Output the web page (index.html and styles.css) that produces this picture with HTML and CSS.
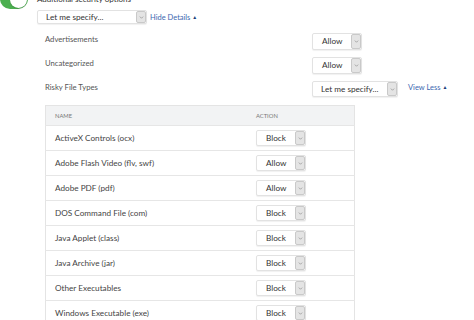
FILE: index.html
```html
<!DOCTYPE html>
<html>
<head>
<meta charset="utf-8">
<link rel="stylesheet" href="styles.css">
</head>
<body>
<div class="section">
  <div class="head">
    <div class="toggle"><span class="knob"></span></div>
    <span class="title">Additional security options</span>
  </div>
  <div class="body">
    <div class="main-row">
      <div class="select sel-main"><span class="val">Let me specify...</span><span class="arr"><svg viewBox="0 0 6 4" width="5" height="3"><path d="M0.8 0.8 L3 3 L5.2 0.8" fill="none" stroke="#8a8a8a" stroke-width="0.9"/></svg></span></div>
      <a class="link">Hide Details <span class="caret">&#9650;</span></a>
    </div>
    <div class="settings">
      <div class="set-row">
        <span class="label">Advertisements</span>
        <div class="select sel-allow"><span class="val">Allow</span><span class="arr"><svg viewBox="0 0 6 4" width="5" height="3"><path d="M0.8 0.8 L3 3 L5.2 0.8" fill="none" stroke="#8a8a8a" stroke-width="0.9"/></svg></span></div>
      </div>
      <div class="set-row">
        <span class="label">Uncategorized</span>
        <div class="select sel-allow"><span class="val">Allow</span><span class="arr"><svg viewBox="0 0 6 4" width="5" height="3"><path d="M0.8 0.8 L3 3 L5.2 0.8" fill="none" stroke="#8a8a8a" stroke-width="0.9"/></svg></span></div>
      </div>
      <div class="set-row">
        <span class="label">Risky File Types</span>
        <div class="select sel-spec"><span class="val">Let me specify...</span><span class="arr"><svg viewBox="0 0 6 4" width="5" height="3"><path d="M0.8 0.8 L3 3 L5.2 0.8" fill="none" stroke="#8a8a8a" stroke-width="0.9"/></svg></span></div>
        <a class="link less">View Less <span class="caret">&#9650;</span></a>
      </div>
    </div>
    <table class="types">
      <thead>
        <tr><th class="c-name">NAME</th><th class="c-act">ACTION</th></tr>
      </thead>
      <tbody>
        <tr><td class="c-name">ActiveX Controls (ocx)</td><td class="c-act"><div class="select sel-blk"><span class="val">Block</span><span class="arr"><svg viewBox="0 0 6 4" width="5" height="3"><path d="M0.8 0.8 L3 3 L5.2 0.8" fill="none" stroke="#8a8a8a" stroke-width="0.9"/></svg></span></div></td></tr>
        <tr><td class="c-name">Adobe Flash Video (flv, swf)</td><td class="c-act"><div class="select sel-blk"><span class="val">Allow</span><span class="arr"><svg viewBox="0 0 6 4" width="5" height="3"><path d="M0.8 0.8 L3 3 L5.2 0.8" fill="none" stroke="#8a8a8a" stroke-width="0.9"/></svg></span></div></td></tr>
        <tr><td class="c-name">Adobe PDF (pdf)</td><td class="c-act"><div class="select sel-blk"><span class="val">Allow</span><span class="arr"><svg viewBox="0 0 6 4" width="5" height="3"><path d="M0.8 0.8 L3 3 L5.2 0.8" fill="none" stroke="#8a8a8a" stroke-width="0.9"/></svg></span></div></td></tr>
        <tr><td class="c-name">DOS Command File (com)</td><td class="c-act"><div class="select sel-blk"><span class="val">Block</span><span class="arr"><svg viewBox="0 0 6 4" width="5" height="3"><path d="M0.8 0.8 L3 3 L5.2 0.8" fill="none" stroke="#8a8a8a" stroke-width="0.9"/></svg></span></div></td></tr>
        <tr><td class="c-name">Java Applet (class)</td><td class="c-act"><div class="select sel-blk"><span class="val">Block</span><span class="arr"><svg viewBox="0 0 6 4" width="5" height="3"><path d="M0.8 0.8 L3 3 L5.2 0.8" fill="none" stroke="#8a8a8a" stroke-width="0.9"/></svg></span></div></td></tr>
        <tr><td class="c-name">Java Archive (jar)</td><td class="c-act"><div class="select sel-blk"><span class="val">Block</span><span class="arr"><svg viewBox="0 0 6 4" width="5" height="3"><path d="M0.8 0.8 L3 3 L5.2 0.8" fill="none" stroke="#8a8a8a" stroke-width="0.9"/></svg></span></div></td></tr>
        <tr><td class="c-name">Other Executables</td><td class="c-act"><div class="select sel-blk"><span class="val">Block</span><span class="arr"><svg viewBox="0 0 6 4" width="5" height="3"><path d="M0.8 0.8 L3 3 L5.2 0.8" fill="none" stroke="#8a8a8a" stroke-width="0.9"/></svg></span></div></td></tr>
        <tr><td class="c-name">Windows Executable (exe)</td><td class="c-act"><div class="select sel-blk"><span class="val">Block</span><span class="arr"><svg viewBox="0 0 6 4" width="5" height="3"><path d="M0.8 0.8 L3 3 L5.2 0.8" fill="none" stroke="#8a8a8a" stroke-width="0.9"/></svg></span></div></td></tr>
      </tbody>
    </table>
  </div>
</div>
</body>
</html>
```
FILE: styles.css
```css
html, body {
  margin: 0;
  padding: 0;
  background: #fff;
}
body {
  width: 474px;
  height: 320px;
  overflow: hidden;
  font-family: Lato, "Open Sans", sans-serif;
  color: #4a4a4a;
  font-size: 8px;
}
.section {
  display: flex;
  flex-direction: column;
}
.head {
  display: flex;
  align-items: center;
  gap: 9px;
  height: 20px;
  margin-top: -11px;
}
.toggle {
  width: 28px;
  height: 20px;
  box-sizing: border-box;
  border-radius: 10px;
  background: #4caf50;
  display: flex;
  align-items: center;
  justify-content: flex-end;
  padding: 1px;
}
.knob {
  width: 17px;
  height: 17px;
  border-radius: 50%;
  background: #fff;
  box-shadow: 0 1px 1px rgba(0,0,0,0.15);
}
.title {
  font-size: 8px;
  color: #333;
}
.body {
  padding-left: 37px;
  display: flex;
  flex-direction: column;
}
.main-row {
  display: flex;
  align-items: center;
  gap: 3px;
  margin-top: 1px;
}
.select {
  display: flex;
  align-items: stretch;
  box-sizing: border-box;
  border: 1px solid #e2e2e2;
  border-radius: 2px;
  background: #fff;
  box-shadow: 0 1px 1px rgba(0,0,0,0.06);
}
.select .val {
  flex: 1;
  display: flex;
  align-items: center;
  padding-left: 8px;
  color: #333;
  font-size: 8.2px;
  white-space: nowrap;
}
.select .arr {
  width: 10px;
  box-sizing: border-box;
  background: #e4e4e4;
  border: 1px solid #c9c9c9;
  border-radius: 2px;
  display: flex;
  align-items: center;
  justify-content: center;
}
.sel-main { width: 110px; height: 14px; }
.sel-allow { width: 50px; height: 17px; }
.sel-allow .val { padding-left: 9px; }
.sel-spec { width: 86px; height: 16px; }
.sel-blk { width: 50px; height: 16px; }
.sel-blk .val { padding-left: 9px; }
.link {
  color: #3b67b0;
  font-size: 7.5px;
  white-space: nowrap;
}
.caret {
  color: #1f3f7a;
  font-size: 5px;
  vertical-align: 1px;
}
.settings {
  display: flex;
  flex-direction: column;
  padding-left: 8px;
  margin-top: 5px;
}
.set-row {
  display: grid;
  grid-template-columns: 267px auto auto;
  justify-content: start;
  align-items: center;
  height: 24px;
}
.set-row .label {
  font-size: 7.7px;
  color: #555;
  padding-bottom: 4px;
}
.less {
  margin-left: 10px;
  padding-bottom: 4px;
}
.types {
  margin-top: 4px;
  margin-left: 8px;
  width: 310px;
  border-collapse: collapse;
  border: 1px solid #e4e4e4;
}
.types th {
  height: 19px;
  padding: 0;
  background: #f2f3f4;
  font-weight: normal;
  font-size: 5.8px;
  color: #777;
  text-align: left;
  border-bottom: 1px solid #e6e6e6;
}
.types td {
  height: 24px;
  padding: 0;
  border-bottom: 1px solid #e6e6e6;
  font-size: 8.2px;
  color: #444;
}
.types .c-name {
  padding-left: 9px;
  width: 191px;
}
.types .c-act {
  padding-left: 10px;
}
```
